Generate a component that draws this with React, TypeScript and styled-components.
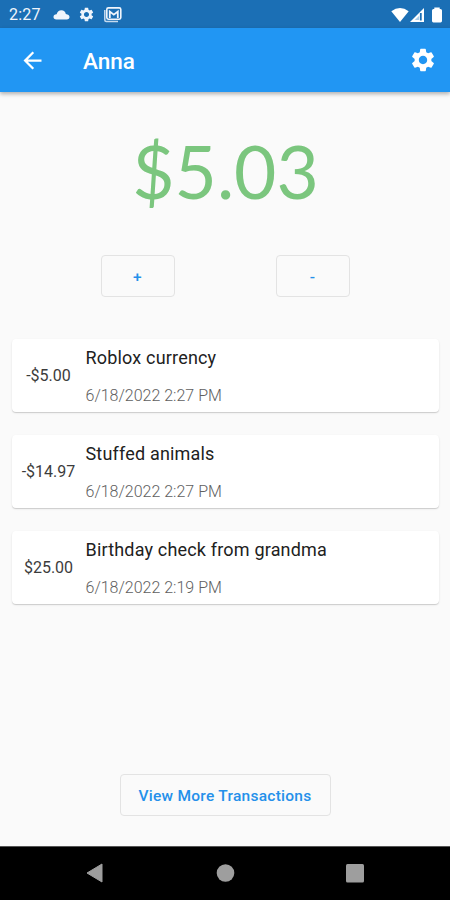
import React from "react";
import styled, { createGlobalStyle } from "styled-components";
import { MdSettings, MdArrowBack } from "react-icons/md";

const GlobalStyle = createGlobalStyle`
  * { box-sizing: border-box; }
  body { margin: 0; background: #fafafa; }
`;

const Screen = styled.div`
  width: 450px;
  height: 900px;
  display: flex;
  flex-direction: column;
  overflow: hidden;
  background: #fafafa;
  font-family: Roboto, sans-serif;
  color: #212121;
`;

const StatusBar = styled.div`
  height: 28px;
  flex: none;
  display: flex;
  align-items: center;
  padding: 1px 7px 0 9px;
  background: #1b6fb5;
  color: #f0f5fc;
`;

const Clock = styled.span`
  width: 44px;
  font-size: 16px;
  line-height: 20px;
  padding-top: 1px;
  letter-spacing: 0.25px;
`;

const StatusIcons = styled.div`
  display: flex;
  align-items: center;
  gap: 8px;
  svg { display: block; }
`;

const SystemIcons = styled.div`
  display: flex;
  align-items: center;
  margin-left: auto;
  svg { display: block; }
  svg:last-child { margin-left: 6px; }
`;

const AppBar = styled.header`
  height: 64px;
  flex: none;
  display: flex;
  align-items: center;
  padding: 0 13px 0 19px;
  background: #2196f3;
  color: #fff;
  box-shadow: 0 2px 4px rgba(0, 0, 0, 0.3);
  svg { display: block; }
`;

const Title = styled.h1`
  flex: 1;
  margin: 1px 0 0 37px;
  font-size: 22.5px;
  line-height: 28px;
  font-weight: 500;
`;

const IconButton = styled.button`
  padding: 0;
  border: 0;
  background: none;
  color: inherit;
`;

const Body = styled.main`
  flex: 1;
  display: flex;
  flex-direction: column;
  align-items: center;
`;

const Balance = styled.div`
  height: 100px;
  margin-top: 29px;
  padding-left: 1px;
  font-family: Lato, sans-serif;
  font-size: 73px;
  line-height: 100px;
  color: #7bc67e;
`;

const Actions = styled.div`
  display: flex;
  gap: 101px;
  margin-top: 34px;
`;

const OutlinedButton = styled.button<{ $width: number }>`
  width: ${(p) => p.$width}px;
  height: 42px;
  padding: 2px 0 0;
  border: 1px solid #e3e3e3;
  border-radius: 4px;
  background: transparent;
  color: #2490ea;
  font: 500 15.5px/20px Roboto, sans-serif;
  letter-spacing: 0.27px;
`;

const List = styled.div`
  width: 427px;
  margin-top: 42px;
  display: flex;
  flex-direction: column;
  gap: 23px;
`;

const Card = styled.article`
  height: 73px;
  display: flex;
  align-items: center;
  border-radius: 4px;
  background: #fff;
  box-shadow: 0 1px 1px rgba(0, 0, 0, 0.15), 0 1px 3px rgba(0, 0, 0, 0.06);
`;

const Amount = styled.div`
  width: 74px;
  padding-top: 1px;
  text-align: center;
  font-size: 16px;
  line-height: 20px;
  color: #3c3c3c;
`;

const Details = styled.div`
  display: flex;
  flex-direction: column;
  gap: 18px;
  padding-top: 1px;
`;

const Name = styled.div`
  font-size: 18px;
  line-height: 22px;
  letter-spacing: 0.18px;
`;

const Time = styled.div`
  font-size: 16px;
  line-height: 18px;
  font-weight: 300;
  color: #606060;
`;

const Footer = styled.div`
  margin-top: auto;
  padding-bottom: 30px;
`;

const NavBar = styled.nav`
  height: 54px;
  flex: none;
  display: flex;
  align-items: center;
  justify-content: space-between;
  padding: 0 85px;
  background: #000;
  border-top: 1px solid #555;
  svg { display: block; margin-top: -1px; }
`;

const transactions = [
  { amount: "-$5.00", name: "Roblox currency", time: "6/18/2022 2:27 PM" },
  { amount: "-$14.97", name: "Stuffed animals", time: "6/18/2022 2:27 PM" },
  { amount: "$25.00", name: "Birthday check from grandma", time: "6/18/2022 2:19 PM" },
];

const CloudIcon = () => (
  <svg width="17" height="16" viewBox="0 0 17 16" fill="currentColor">
    <path d="M3.4 12.500Q.5 12.300.5 9.900T3.600 7.300Q4.800 3.300 8.400 3.300T12.800 7Q16.500 7.600 16.500 10.100T13.500 12.500z" />
  </svg>
);

const MailStackIcon = () => (
  <svg width="20" height="18" viewBox="0 0 20 18" fill="none" stroke="currentColor">
    <path d="M1.8 4v9.900q0 1.5 1.5 1.5H15" strokeWidth="1.5" opacity=".8" />
    <rect x="3.8" y="1.9" width="14" height="11.3" rx="1.6" strokeWidth="1.6" />
    <path d="M6.8 12V5.5l4 3.2 4-3.2V12" strokeWidth="1.8" />
  </svg>
);

const WifiIcon = () => (
  <svg width="18" height="16" viewBox="0 0 18 16" fill="#fff">
    <path d="M.3 4.3Q9-2.4 17.7 4.3L9 15z" />
  </svg>
);

const SignalIcon = () => (
  <svg width="16" height="16" viewBox="0 0 16 16">
    <path d="M1 15 15 1v14z" fill="#fff" />
    <path d="M11.8 6v7.5" stroke="#1b6fb5" strokeWidth="1.8" />
    <path d="M5.8 13.1 10.2 8.7v4.4z" fill="#a9cce9" />
  </svg>
);

const BatteryIcon = () => (
  <svg width="12" height="16" viewBox="0 0 12 16" fill="#fff">
    <path d="M3.3.6h5.400v1.300H9.500q1.500 0 1.500 1.500V14q0 1.400-1.400 1.400H2.400Q1 15.400 1 14V3.400Q1 1.900 2.500 1.900h.8z" />
  </svg>
);

export default function App() {
  return (
    <Screen>
      <GlobalStyle />
      <StatusBar>
        <Clock>2:27</Clock>
        <StatusIcons>
          <CloudIcon />
          <MdSettings size={17} />
          <MailStackIcon />
        </StatusIcons>
        <SystemIcons>
          <WifiIcon />
          <SignalIcon />
          <BatteryIcon />
        </SystemIcons>
      </StatusBar>
      <AppBar>
        <IconButton aria-label="Back"><MdArrowBack size={27} /></IconButton>
        <Title>Anna</Title>
        <IconButton aria-label="Settings"><MdSettings size={28} /></IconButton>
      </AppBar>
      <Body>
        <Balance>$5.03</Balance>
        <Actions>
          <OutlinedButton $width={74}>+</OutlinedButton>
          <OutlinedButton $width={74}>-</OutlinedButton>
        </Actions>
        <List>
          {transactions.map((t) => (
            <Card key={t.name}>
              <Amount>{t.amount}</Amount>
              <Details>
                <Name>{t.name}</Name>
                <Time>{t.time}</Time>
              </Details>
            </Card>
          ))}
        </List>
        <Footer>
          <OutlinedButton $width={211}>View More Transactions</OutlinedButton>
        </Footer>
      </Body>
      <NavBar>
        <svg width="20" height="22" viewBox="0 0 20 22"><path d="M2 11 17 2v18z" fill="#9e9e9e" stroke="#9e9e9e" strokeLinejoin="round" /></svg>
        <svg width="20" height="20" viewBox="0 0 20 20"><circle cx="10.5" cy="10" r="8.8" fill="#9e9e9e" /></svg>
        <svg width="20" height="20" viewBox="0 0 20 20"><rect x="1" y="1" width="18" height="18.5" rx="1.5" fill="#9e9e9e" /></svg>
      </NavBar>
    </Screen>
  );
}
